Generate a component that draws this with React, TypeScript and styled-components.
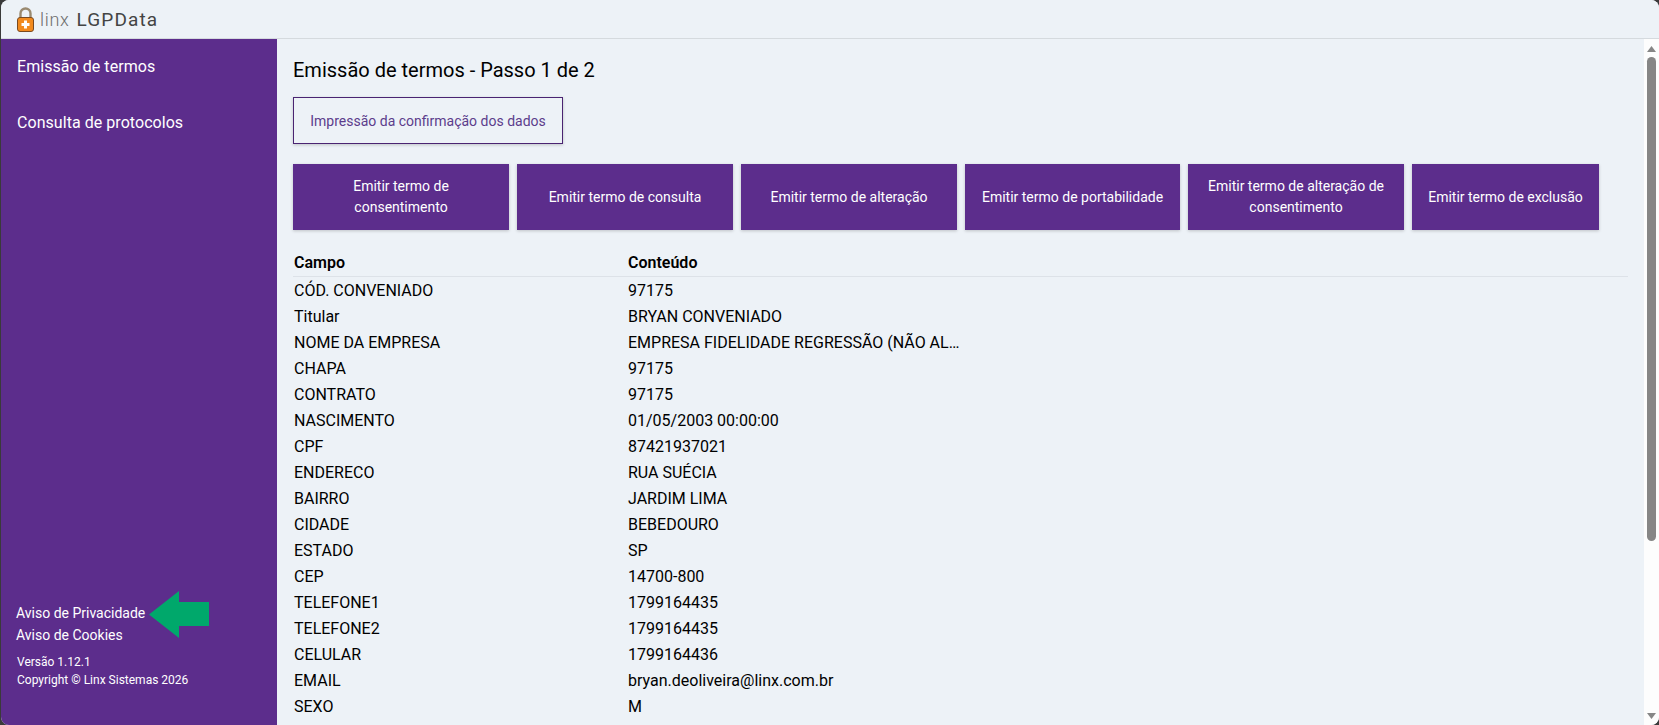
import React from 'react';
import styled, { createGlobalStyle } from 'styled-components';

const Global = createGlobalStyle`
  html, body { margin: 0; padding: 0; height: 100%; background: #3a3a3a; overflow: hidden; }
  #root { height: 100%; }
  * { box-sizing: border-box; }
`;

const Frame = styled.div`
  height: 725px;
  margin-left: 1px;
  display: flex;
  flex-direction: column;
  border-radius: 8px;
  overflow: hidden;
  background: #edf2f7;
  font-family: Roboto, "Liberation Sans", sans-serif;
  color: #000;
`;
const TopBar = styled.header`
  height: 39px;
  flex: none;
  display: flex;
  align-items: center;
  padding-left: 16px;
  gap: 6px;
  background: #edf2f7;
  border-bottom: 1px solid #d5dade;
`;
const Brand = styled.span`
  font-family: Roboto, sans-serif;
  font-size: 18px;
  letter-spacing: 0.7px;
  color: #6e6e6e;
  font-weight: 300;
  span { font-size: 19px; color: #444; font-weight: 400; margin-left: 7px; letter-spacing: 1.1px; }
`;
const Body = styled.div`
  flex: 1;
  display: flex;
  min-height: 0;
`;
const Sidebar = styled.aside`
  width: 276px;
  flex: none;
  background: #5c2d8c;
  color: #fff;
  display: flex;
  flex-direction: column;
  padding: 18px 16px 0 16px;
`;
const NavLink = styled.a`
  font-size: 16px;
  line-height: 19px;
  margin-bottom: 37px;
  letter-spacing: 0.05px;
`;
const SideFooter = styled.div`
  margin-top: auto;
  padding-bottom: 36px;
  position: relative;
`;
const FooterLink = styled.div`
  font-size: 14px;
  line-height: 22px;
  margin-left: -1px;
`;
const Meta = styled.div`
  font-size: 12px;
  line-height: 18px;
`;
const MetaGroup = styled.div`
  margin-top: 7px;
`;
const Arrow = styled.svg`
  position: absolute;
  left: 132px;
  top: -11px;
`;
const Main = styled.main`
  flex: 1;
  min-width: 0;
  padding: 18px 16px 0 16px;
  overflow: hidden;
`;
const Title = styled.h1`
  margin: 0 0 13px 0;
  font-size: 20px;
  line-height: 27px;
  font-weight: 400;
`;
const OutlineButton = styled.button`
  display: block;
  width: 270px;
  height: 47px;
  background: transparent;
  border: 1px solid #4a2472;
  color: #5c3d8c;
  font: 400 14px Roboto, sans-serif;
  box-shadow: 0 1px 3px rgba(0,0,0,.2);
  margin-bottom: 20px;
`;
const Actions = styled.div`
  display: flex;
  gap: 8px;
  margin-bottom: 19px;
`;
const ActionButton = styled.button<{ $width: number }>`
  width: ${(p) => p.$width}px;
  height: 66px;
  flex: none;
  border: 0;
  padding: 0 16px;
  background: #5c2d8c;
  color: #fff;
  font: 400 14px/21px Roboto, sans-serif;
  box-shadow: 0 1px 3px rgba(0,0,0,.2);
`;
const HeadRow = styled.div`
  display: grid;
  grid-template-columns: 334px 1fr;
  height: 28px;
  align-items: center;
  padding-left: 1px;
  border-bottom: 1px solid #dde2e8;
  font-size: 16px;
  font-weight: 600;
`;
const Row = styled.div`
  display: grid;
  grid-template-columns: 334px 1fr;
  height: 26px;
  align-items: center;
  padding-left: 1px;
  font-size: 16px;
`;
const ScrollTrack = styled.div`
  width: 15px;
  flex: none;
  background: #fdfdfd;
  display: flex;
  flex-direction: column;
  align-items: center;
  padding: 7px 0 6px;
`;
const Thumb = styled.div`
  width: 9px;
  height: 484px;
  margin-top: 5px;
  border-radius: 5px;
  background: #868686;
`;
const ArrowIcon = styled.svg`
  flex: none;
  &:last-child { margin-top: auto; }
`;

const rows: [string, string][] = [
  ['CÓD. CONVENIADO', '97175'],
  ['Titular', 'BRYAN CONVENIADO'],
  ['NOME DA EMPRESA', 'EMPRESA FIDELIDADE REGRESSÃO (NÃO AL…'],
  ['CHAPA', '97175'],
  ['CONTRATO', '97175'],
  ['NASCIMENTO', '01/05/2003 00:00:00'],
  ['CPF', '87421937021'],
  ['ENDERECO', 'RUA SUÉCIA'],
  ['BAIRRO', 'JARDIM LIMA'],
  ['CIDADE', 'BEBEDOURO'],
  ['ESTADO', 'SP'],
  ['CEP', '14700-800'],
  ['TELEFONE1', '1799164435'],
  ['TELEFONE2', '1799164435'],
  ['CELULAR', '1799164436'],
  ['EMAIL', 'bryan.deoliveira@linx.com.br'],
  ['SEXO', 'M'],
];
const actions: { label: string; width: number }[] = [
  { label: 'Emitir termo de consentimento', width: 216 },
  { label: 'Emitir termo de consulta', width: 216 },
  { label: 'Emitir termo de alteração', width: 216 },
  { label: 'Emitir termo de portabilidade', width: 215 },
  { label: 'Emitir termo de alteração de consentimento', width: 216 },
  { label: 'Emitir termo de exclusão', width: 187 },
];

const Lock = () => (
  <svg width="17" height="25" viewBox="0 0 17 25">
    <path d="M3.5 12V6.5a5 5 0 0 1 10 0V12" fill="none" stroke="#9a8a70" strokeWidth="2.4" />
    <rect x="0.5" y="10.5" width="16" height="14" rx="2.5" fill="#f28a1e" stroke="#7a4a20" strokeWidth="1" />
    <path d="M7 13.5h3v2.5h2.5v3H10v2.5H7V19H4.5v-3H7z" fill="#fff" />
  </svg>
);

export default function App() {
  return (
    <>
      <Global />
      <Frame>
        <TopBar>
          <Lock />
          <Brand>linx<span>LGPData</span></Brand>
        </TopBar>
        <Body>
          <Sidebar>
            <NavLink>Emissão de termos</NavLink>
            <NavLink>Consulta de protocolos</NavLink>
            <SideFooter>
              <Arrow width="60" height="47" viewBox="0 0 60 47">
                <path d="M0 23.5 30 0V11H60V35H30V47Z" fill="#00a86b" />
              </Arrow>
              <FooterLink>Aviso de Privacidade</FooterLink>
              <FooterLink>Aviso de Cookies</FooterLink>
              <MetaGroup>
                <Meta>Versão 1.12.1</Meta>
                <Meta>Copyright © Linx Sistemas 2026</Meta>
              </MetaGroup>
            </SideFooter>
          </Sidebar>
          <Main>
            <Title>Emissão de termos - Passo 1 de 2</Title>
            <OutlineButton>Impressão da confirmação dos dados</OutlineButton>
            <Actions>
              {actions.map((a) => <ActionButton key={a.label} $width={a.width}>{a.label}</ActionButton>)}
            </Actions>
            <HeadRow><span>Campo</span><span>Conteúdo</span></HeadRow>
            {rows.map(([k, v]) => <Row key={k}><span>{k}</span><span>{v}</span></Row>)}
          </Main>
          <ScrollTrack>
            <ArrowIcon width="9" height="6" viewBox="0 0 9 6"><path d="M4.5 0 9 6H0Z" fill="#868686" /></ArrowIcon>
            <Thumb />
            <ArrowIcon width="9" height="6" viewBox="0 0 9 6"><path d="M0 0H9L4.5 6Z" fill="#868686" /></ArrowIcon>
          </ScrollTrack>
        </Body>
      </Frame>
    </>
  );
}
